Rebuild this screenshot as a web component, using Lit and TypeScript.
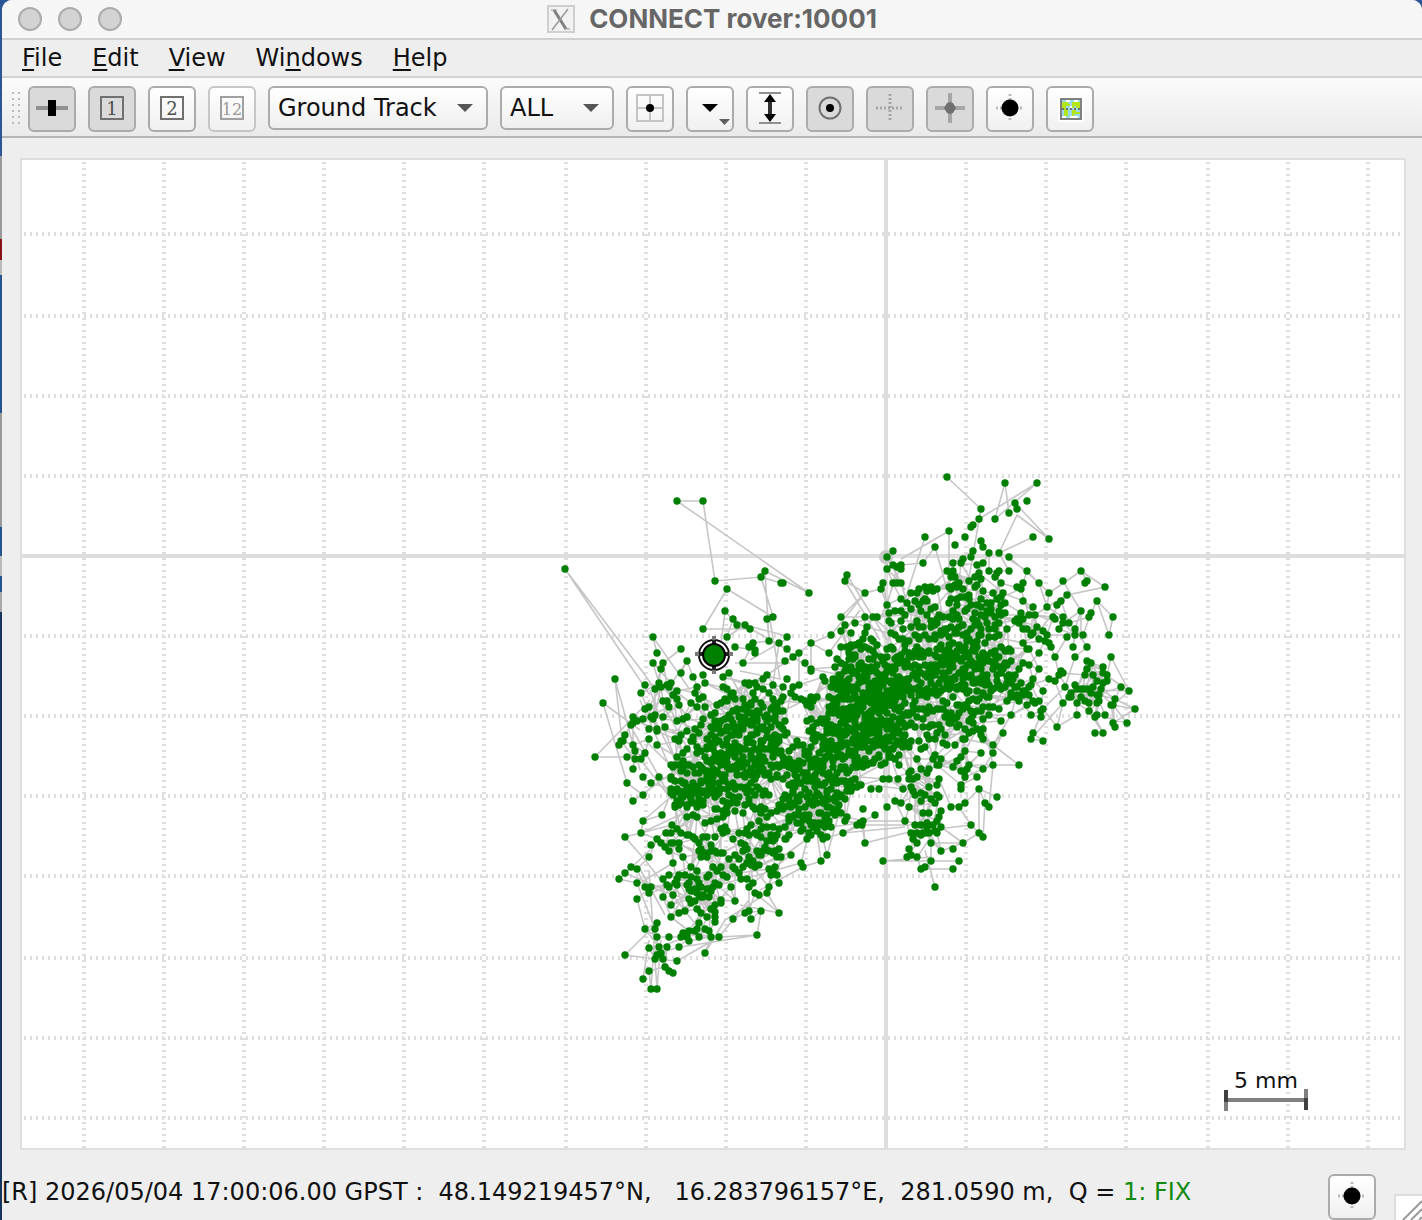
import { LitElement, html, css, svg } from "lit";
import { customElement } from "lit/decorators.js";

type Pt = [number, number];

/* Outlying fixes of the track, in plot units. */
const OUTER = `677,501 703,501 715,581 727,589 761,577 765,571 781,583 783,583 809,593 565,569 725,611 733,619 737,625 745,625 750,629 773,617 767,619
703,629 653,637 727,637 735,647 657,653 681,649 687,661 653,663 663,663 661,669 681,673 615,679 603,703 645,685 641,693 787,637 811,643
769,641 779,643 787,649 753,643 749,647 755,650 755,653 743,663 785,661 793,657 799,653 805,663 841,617 831,635 829,653 845,625 847,575
845,581 841,631 925,537 949,531 935,547 965,537 955,545 981,541 983,547 973,551 989,553 999,553 1009,557 893,551 887,557 971,557
963,559 953,563 961,563 923,563 977,565 983,563 887,569 893,565 901,565 901,569 897,567 947,571 953,571 955,577 989,571 999,571 997,573
1009,571 1027,571 995,577 1001,583 1039,583 1023,583 1017,587 1021,589 883,583 881,589 893,583 901,583 897,583 947,477 1005,483
1037,483 1027,501 1015,503 1017,509 1009,513 995,519 981,509 979,519 973,525 971,527 1033,537 1049,539 1081,571 1063,581 1087,581
1085,583 1105,587 1049,593 1067,595 1061,601 1057,605 1047,607 1097,601 1081,611 1091,613 1089,617 1113,617 1109,635 1063,617
1053,617 1055,619 1063,623 1069,623 1075,629 1059,629 1067,637 1075,635 1083,635 1073,647 1087,647 1075,657 1055,657 1039,653
1039,669 1111,657 1087,661 1091,663 1103,667 1107,675 1087,669 1121,687 1129,691 1043,631 1043,691 1033,679 1019,669 1045,641
1049,643 1051,647 1061,671 1059,675 1063,673 1049,679 1055,681 865,593 887,605 901,599 901,611 865,617 873,617 877,617 1135,709 1127,723
1103,733 1095,733 1115,727 1113,723 1115,699 1113,705 1111,705 1077,715 1105,715 1097,715 1095,717 1089,711 1089,703 1097,703 1099,695
1063,703 1057,727 1043,741 1031,739 1033,733 1031,715 1041,717 1043,709 1041,711 1039,701 1011,715 1001,721 1003,733 993,745 993,753
981,753 993,765 1019,765 983,769 977,777 965,777 979,789 997,797 961,785 961,789 989,807 985,803 965,803 959,807 951,807 971,825
979,833 983,837 941,827 937,833 929,833 935,831 931,843 963,843 953,849 941,851 959,861 931,861 953,869 935,887 925,867 921,869 907,857
911,855 909,849 917,843 913,839 911,833 883,861 865,843 863,809 875,815 887,807 871,789 879,789 903,789 883,779 889,779 898,779
909,779 913,779 909,807 901,803 895,801 905,821 860,823 863,821 862,825 843,833 823,839 827,855 821,861 595,757 627,757 619,745 625,735
623,741 633,745 635,751 645,753 635,759 641,759 633,769 627,783 643,777 651,783 659,777 649,739 657,745 665,727 649,729 657,731 643,795
633,801 643,821 641,833 625,837 651,845 649,857 662,815 672,825 666,833 631,867 637,869 625,873 619,879 637,883 637,899 645,887
651,887 649,893 673,863 683,857 669,851 665,847 657,839 661,843 645,929 655,929 657,923 657,937 669,937 671,917 671,905 673,895
625,955 649,948 659,947 667,947 679,947 677,961 661,953 655,959 663,959 657,955 665,967 669,971 673,973 649,971 643,979 651,989 657,989
681,937 689,941 705,953 719,937 757,935 761,911 779,913 751,919 749,911 745,913 733,919 735,901 721,903 721,900 731,887 715,917
715,922 715,912 709,931 705,929 683,933 689,931 695,931 699,923 701,913 707,917 685,911 679,913 695,901 689,899 767,893 759,895 755,893
769,887 779,883 749,887 777,875 771,875 773,870 803,867 801,863 791,855 781,857 779,849 786,839 785,839 807,839 633,723 631,725 621,741`;

/* Horizontal slices of the cloud: top, then [from, to, density] runs. */
const SLICES: [number, [number, number, number][]][] = [
  [572, [[948, 960, 2], [964, 985, 2]]],
  [584, [[908, 922, 2], [924, 938, 4], [946, 962, 4], [964, 986, 2], [990, 1002, 1]]],
  [596, [[906, 935, 3], [946, 960, 3], [964, 1006, 3], [1018, 1034, 1]]],
  [608, [[886, 906, 2], [908, 945, 2], [945, 1005, 3], [1012, 1036, 2]]],
  [620, [[846, 866, 1], [886, 892, 3], [896, 935, 2], [935, 1000, 3], [1005, 1036, 2]]],
  [632, [[850, 878, 3], [888, 1000, 3], [1020, 1046, 2]]],
  [644, [[840, 876, 3], [884, 935, 3], [935, 1012, 4], [1022, 1034, 2]]],
  [656, [[834, 930, 4], [930, 1010, 5], [1016, 1028, 1]]],
  [668, [[690, 706, 1], [718, 732, 1], [760, 770, 2], [782, 786, 1], [808, 812, 4], [820, 824, 4], [832, 900, 5], [900, 1016, 4], [1084, 1104, 1]]],
  [680, [[653, 676, 3], [690, 706, 2], [718, 732, 2], [742, 758, 3], [762, 784, 1], [790, 802, 1], [828, 890, 5], [890, 1012, 4], [1012, 1034, 3], [1064, 1108, 3]]],
  [692, [[658, 678, 2], [690, 704, 2], [714, 736, 3], [740, 760, 3], [766, 784, 3], [790, 818, 3], [828, 900, 5], [900, 990, 3], [1004, 1038, 3], [1066, 1084, 3], [1090, 1102, 2]]],
  [704, [[640, 656, 2], [668, 678, 2], [690, 718, 1], [728, 782, 4], [802, 812, 2], [826, 910, 5], [910, 998, 3]]],
  [716, [[630, 665, 2], [676, 704, 2], [710, 786, 4], [804, 820, 3], [820, 905, 5], [905, 985, 3]]],
  [728, [[672, 700, 2], [706, 788, 4], [808, 830, 4], [830, 906, 5], [916, 945, 2], [960, 984, 3]]],
  [740, [[676, 704, 2], [704, 780, 4], [786, 820, 3], [820, 910, 5], [918, 928, 2], [938, 966, 1]]],
  [752, [[672, 705, 2], [705, 764, 5], [770, 900, 4], [914, 918, 2], [930, 942, 3], [954, 970, 2]]],
  [764, [[668, 700, 3], [700, 765, 5], [768, 862, 4], [904, 936, 2], [952, 970, 2]]],
  [776, [[668, 735, 4], [735, 758, 3], [768, 790, 2], [792, 862, 4], [910, 914, 1], [926, 942, 2]]],
  [788, [[668, 720, 5], [720, 770, 3], [780, 850, 4], [910, 940, 3]]],
  [800, [[670, 705, 3], [712, 770, 3], [774, 800, 4], [804, 842, 4], [934, 942, 2]]],
  [812, [[682, 704, 2], [708, 728, 2], [750, 770, 2], [786, 834, 5], [840, 856, 2], [918, 940, 3]]],
  [824, [[668, 696, 2], [718, 728, 4], [738, 788, 3], [798, 832, 3], [910, 928, 4]]],
  [836, [[668, 682, 3], [692, 714, 3], [732, 748, 2], [758, 776, 3]]],
  [848, [[696, 728, 3], [732, 780, 3], [914, 918, 1]]],
  [860, [[684, 698, 1], [706, 726, 1], [730, 760, 3], [766, 776, 2]]],
  [872, [[660, 700, 3], [704, 728, 3], [740, 756, 2]]],
  [884, [[662, 676, 2], [688, 714, 5]]],
  [896, [[686, 700, 2], [704, 716, 2]]],
  [926, [[680, 712, 1]]],
];

/* Open patches that no short leg may cross: centre x, centre y, radius. */
const GAPS = [[796, 727, 9], [750, 672, 9], [790, 682, 8], [738, 671, 8], [718, 676, 4], [875, 800, 14], [864, 772, 0], [800, 715, 6], [920, 752, 5], [945, 815, 7]];

/* Hand-placed legs of the track between far-apart fixes. */
const LEGS =
  "M677 501H703L715 581L761 577L773 617M765 571L809 593L677 501M765 571L769 640M727 589L773 617M727 589L703 629H750" +
  "M565 569L650 695M565 569L645 675L662 700M615 679L622 740M615 679L640 770M603 703L627 783M603 703L640 730M595 757H627L640 759M595 757L650 700" +
  "M653 637L690 690M725 611L719 660M745 625L790 637L750 660M735 663L790 663M740 671L780 679L770 620M733 619L787 649M779 643L772 690M811 643V665" +
  "M947 477L981 509L979 519M1005 483L995 519L1037 483L979 519M1005 483L1009 513M1015 503L1049 539L1017 515L999 553L1033 537M1017 515L1049 539" +
  "M981 509L965 600M949 531L901 559M949 531V600M925 537L905 600M935 547L950 600M1009 557L1039 583L1047 607M1027 571L1010 560M989 571H1010" +
  "M847 575L887 640M845 581L865 593L841 617H877M845 581L880 640M831 635L865 593M829 653L860 610M901 565L880 620M887 557L905 590" +
  "M1081 571L1049 593M1081 571L1105 587L1067 595L1040 630M1097 601L1113 617L1109 635L1097 601M1063 581L1081 611V640M1111 657L1129 691L1100 690" +
  "M1111 657L1103 695M1135 709L1115 699M1135 709L1113 723M1127 723L1097 715M1103 733L1089 711M1057 727L1063 703L1031 739L1043 709M1043 741L1033 733" +
  "M1019 765L993 745M1019 765H983M989 807L993 765L981 710M1003 733L993 745L1011 715M979 833V789M983 837L985 803M997 797L979 789M971 825L905 833M971 825L959 807" +
  "M959 861H883L931 857M953 869H921M935 887L925 850M963 843L941 827M963 843H931M905 821H865L843 833L905 827M865 843L905 833M865 843L862 825M915 825H865" +
  "M883 779L850 776M903 789L870 785M823 839L827 800M827 855L840 810M821 861L812 800M803 867L760 890M801 863L740 880M807 839L785 855L750 870" +
  "M779 913L755 893M761 911L757 935L719 937L677 961M779 913L740 905M757 935L681 947M705 953L725 920L767 893M719 937L749 900" +
  "M625 955L657 923M625 955L655 959M651 989L655 929L637 883M657 989L661 940M643 979L649 940M645 929L637 899M657 989L649 870M619 879L650 850M625 837L645 860L700 930" +
  "M625 837L672 825M643 821L690 780M641 833L690 810M633 801L690 760M625 873L665 890M673 863L640 883M665 915L640 869M671 917L700 870M645 887L715 880" +
  "M640 700L680 790M650 690L690 800M630 725L672 800M655 720L690 790M645 740L680 775M640 759L672 800M660 700L700 770";

function noise(seed: number): () => number {
  let s = seed;
  return () => {
    s = (s * 1664525 + 1013904223) % 4294967296;
    return s / 4294967296;
  };
}

/* Whether the leg a-b passes through one of the open patches. */
function crossesGap([x, y]: Pt, [u, v]: Pt): boolean {
  const len = (u - x) ** 2 + (v - y) ** 2;
  return GAPS.some(([gx, gy, r]) => {
    const t = Math.max(0, Math.min(1, ((gx - x) * (u - x) + (gy - y) * (v - y)) / len));
    return Math.hypot(x + t * (u - x) - gx, y + t * (v - y) - gy) < r;
  });
}

function buildTrack(): { fixes: Pt[]; path: string } {
  const rnd = noise(20260504);
  const outer = OUTER.split(/\s+/).map((p) => p.split(",").map(Number) as Pt);
  const inner: Pt[] = [];
  const rate = [0, 0.011, 0.017, 0.025, 0.034, 0.046];
  for (const [top, runs] of SLICES) {
    for (const [from, to, level] of runs) {
      const n = Math.max(1, Math.round((to - from) * 12 * rate[level]));
      for (let i = 0; i < n; i++) {
        const x = from + (to - from) * ((i + rnd()) / n);
        const y = top + 12 * rnd();
        inner.push([2 * Math.round(x / 2) + 1, 2 * Math.round(y / 2) + 1]);
      }
    }
  }
  const fixes = [...outer, ...inner];
  let path = LEGS;
  fixes.forEach(([x, y], i) => {
    const reach = i < outer.length ? 24 : 32;
    let made = 0;
    for (let t = 0; t < 240 && made < 2; t++) {
      const [u, v] = fixes[Math.floor(rnd() * fixes.length)];
      const d = Math.hypot(u - x, v - y);
      if (y < 560 || d < 4 || d > reach || crossesGap([x, y], [u, v])) continue;
      path += `M${x} ${y}L${u} ${v}`;
      made++;
    }
  });
  return { fixes, path };
}

const track = buildTrack();
const dots = track.fixes.map(([x, y]) => `M${x} ${y}h0`).join("");

const COLUMNS = [84, 164, 244, 324, 404, 484, 566, 646, 726, 806, 966, 1046, 1126, 1208, 1288, 1368];
const ROWS = [234, 316, 396, 476, 636, 716, 796, 876, 958, 1038, 1118];

const icon = (body: unknown) => html`<svg class="icon" viewBox="0 0 44 42" aria-hidden="true">${body}</svg>`;

/* Every icon is drawn in a 44 x 42 box centred on 22,20. */
const icons = {
  connect: icon(svg`<path d="M6 20H38" stroke="#909090" stroke-width="4"/><path d="M18 12h8v16h-8z"/>`),
  one: icon(svg`<rect x="11" y="9" width="22" height="22" fill="none" stroke="#707070" stroke-width="2"/>
    <text x="22" y="27" class="num">1</text>`),
  two: icon(svg`<rect x="11" y="9" width="22" height="22" fill="none" stroke="#707070" stroke-width="2"/>
    <text x="22" y="27" class="num">2</text>`),
  both: icon(svg`<rect x="11" y="9" width="22" height="22" fill="none" stroke="#a0a0a0" stroke-width="2"/>
    <text x="22" y="27" class="num pale">12</text>`),
  center: icon(svg`<path d="M9 7h26v26H9zM22 7v26M9 20h26" fill="none" stroke="#c4c4c4" stroke-width="2"/><circle cx="22" cy="20" r="4"/>`),
  menu: icon(svg`<path d="M14 16h16l-8 8z"/><path d="M31 31h11l-5.500 6z" fill="#606060"/>`),
  fit: icon(svg`<path d="M11 5h22M11 35h22" stroke="#909090" stroke-width="2"/><path d="M22 12v16" stroke="#303030" stroke-width="4"/>
    <path d="M22 6l6 8H16zM22 34l6-8H16z"/>`),
  circle: icon(svg`<circle cx="22" cy="20" r="10.5" fill="none" stroke="#707070" stroke-width="2"/><circle cx="22" cy="20" r="4"/>`),
  grid: icon(svg`<path d="M8 20h28M22 6v28" stroke="#a4a4a4" stroke-width="3" stroke-dasharray="2 2"/>`),
  cross: icon(svg`<path d="M7 20h30M22 5v30" stroke="#a6a6a6" stroke-width="4"/><path d="M22 14l3 1 3 5-3 5-3 1-3-1-3-5 3-5z" fill="#707070"/>`),
  track: icon(svg`<path d="M8 20h28M22 6v28" stroke="#bbb" stroke-width="3" stroke-dasharray="2 2"/><circle cx="22" cy="20" r="8.5"/>`),
  map: icon(svg`<path d="M10 8h26v26H10z" fill="#fff"/><path d="M13 11h20v20H13z" fill="#9bd8ea" stroke="#808080" stroke-width="2"/>
    <path d="M18 12h4v2h-4zM26 12h4v2h-4zM14 28h4v2h-4zM22 28h8v2h-8zM22 18h2v2h-2z" fill="#fff"/>
    <path d="M14 14h6v4h-2v4h-2v-2h-2zM24 14h8v6h-4v-2h-2v2h-2zM16 22h4v6h-4zM24 22h4v4h-2v2h-2zM28 24h4v2h-4zM20 16h2v2h-2z" fill="#b0e61a"/>
    <path d="M14 20h2v2h-2zM18 20h2v2h-2zM22 20h2v2h-2zM26 20h2v2h-2zM30 20h2v2h-2z" fill="#707070"/>`),
};

@customElement("track-plot")
class TrackPlot extends LitElement {
  static styles = css`
    :host { display: block; }
    .plot { display: block; width: 100%; height: auto; background: #fff; }
    .label { font: 22px "DejaVu Sans", sans-serif; text-anchor: middle; fill: #111; }
  `;
  render() {
    return html`<svg class="plot" viewBox="20 158 1386 992" role="img" aria-label="Ground track">
      <g stroke="#dedede" fill="none">
        <path stroke-width="4" stroke-dasharray="2 4" d=${COLUMNS.map((x) => `M${x} 162V1149`).join("")} />
        <path stroke-width="4" stroke-dasharray="2 4" d=${ROWS.map((y) => `M24 ${y}H1405`).join("")} />
        <path stroke-width="4" d="M886 158V1150M20 556H1406" />
        <rect x="21" y="159" width="1384" height="990" stroke-width="2" />
      </g>
      <circle cx="886" cy="557" r="7" fill="#c8c8c8" />
      <path d=${track.path} fill="none" stroke="#c6c6c6" stroke-width="1.6" />
      <path d=${dots} fill="none" stroke="#008000" stroke-width="7.4" stroke-linecap="round" />
      <circle cx="714" cy="655" r="15" fill="#fff" stroke="#111" stroke-width="2" />
      <path d="M714 636v4M714 670v4M695 654h4M729 654h4" stroke="#777" stroke-width="4" />
      <path d="M714 640v5M714 665v5M699 654h5M724 654h5" stroke="#222" stroke-width="4" />
      <circle cx="714" cy="655" r="11" fill="#008000" stroke="#000" stroke-width="2" />
      <path d="M1226 1100H1306" stroke="#808080" stroke-width="4" />
      <path d="M1226 1102v9M1306 1089v9" stroke="#808080" stroke-width="4" />
      <path d="M1226 1090v12M1306 1098v12" stroke="#404040" stroke-width="4" />
      <text class="label" x="1266" y="1088">5 mm</text>
    </svg>`;
  }
}

@customElement("app-root")
class AppRoot extends LitElement {
  static styles = css`
    :host { display: block; font-family: "DejaVu Sans", sans-serif; color: #111; }
    * { box-sizing: border-box; }
    .desktop {
      min-height: 100vh; padding-left: 2px; display: flex;
      background: linear-gradient(#2b5797 0 156px, #999 156px 239px, #8a1216 239px 260px, #bbb 260px 275px, #24558f 275px 413px,
        #999 413px 527px, #24558f 527px 556px, #bbb 556px 576px, #24558f 576px 592px, #aaa 592px 612px, #17365f 612px);
    }
    .window { flex: 1; min-width: 0; display: flex; flex-direction: column; background: #eee; border-radius: 10px 10px 0 0; overflow: hidden; }
    .title { height: 40px; display: flex; align-items: center; background: #f6f6f6; border-bottom: 2px solid #d0d0d0; padding: 0 16px; }
    .lights { display: flex; gap: 16px; flex: 1; }
    .light { width: 24px; height: 24px; padding: 0; border: 2px solid #acacac; border-radius: 50%; background: #d3d3d3; }
    .caption { display: flex; align-items: center; gap: 14px; }
    .caption h1 { margin: 0; font: 700 26px/38px Inter, sans-serif; color: #666; }
    .xicon { width: 28px; height: 28px; display: block; }
    .spacer { flex: 1; }
    .menu { height: 38px; display: flex; align-items: center; gap: 30px; padding: 0 20px; border-bottom: 2px solid #d2d2d2; }
    .menu button { border: 0; padding: 0; background: none; font: 24px/28px "DejaVu Sans", sans-serif; color: #111; }
    .menu u { text-decoration-thickness: 2px; text-underline-offset: 3px; }
    .tools { min-height: 60px; display: flex; gap: 6px; padding: 8px 10px 4px; background: linear-gradient(#fbfbfb, #eaeaea); border-bottom: 2px solid #b6b6b6; }
    .grip { width: 10px; height: 44px; flex: none; display: block; }
    .row { display: flex; flex-wrap: wrap; gap: 12px; }
    .tool { width: 48px; height: 46px; flex: none; padding: 0; border: 2px solid #ababab; border-radius: 6px; background: linear-gradient(#fff, #f0f0f0); display: block; }
    .tool[aria-pressed="true"] { background: #dadada; }
    .tool:disabled { border-color: #c6c6c6; }
    .icon { display: block; width: 44px; height: 42px; }
    .num { font: 18px "DejaVu Serif", serif; text-anchor: middle; fill: #505050; }
    .pale { font-size: 16px; fill: #999; }
    .pick { position: relative; display: block; height: 44px; }
    .pick select {
      appearance: none; width: 100%; height: 44px; padding: 0 8px; border: 2px solid #ababab; border-radius: 6px;
      background: linear-gradient(#fff, #efefef); font: 24px "DejaVu Sans", sans-serif; color: #111;
    }
    .pick svg { position: absolute; right: 15px; top: 18px; width: 16px; height: 8px; pointer-events: none; }
    .wide { width: 220px; }
    .slim { width: 114px; }
    .main { padding: 20px 16px 0 18px; flex: 1; }
    .status { min-height: 70px; display: flex; align-items: flex-end; }
    .fix { flex: 1; margin: 0; white-space: pre; font-size: 24px; line-height: 28px; padding-bottom: 14px; }
    .ok { color: #118a11; }
    .corner { width: 28px; height: 26px; margin-left: 18px; display: block; flex: none; }
  `;

  private menuItem(before: string, key: string, after: string) {
    return html`<button type="button">${before}<u>${key}</u>${after}</button>`;
  }

  private tool(label: string, glyph: unknown, pressed = false, disabled = false) {
    return html`<button class="tool" type="button" aria-label=${label} aria-pressed=${pressed} ?disabled=${disabled}>${glyph}</button>`;
  }

  private pick(label: string, size: string, options: string[]) {
    return html`<label class="pick ${size}">
      <select aria-label=${label}>${options.map((o) => html`<option>${o}</option>`)}</select>
      <svg viewBox="0 0 16 8" aria-hidden="true"><path d="M0 0h16l-8 8z" fill="#555" /></svg>
    </label>`;
  }

  render() {
    return html`<div class="desktop"><div class="window">
      <header class="title">
        <div class="lights">
          <button class="light" aria-label="Close"></button>
          <button class="light" aria-label="Minimize"></button>
          <button class="light" aria-label="Zoom"></button>
        </div>
        <div class="caption">
          <svg class="xicon" viewBox="0 0 28 28" aria-hidden="true">
            <rect x="1" y="1" width="26" height="26" fill="#f2f2f2" stroke="#cfcfcf" stroke-width="2" />
            <path d="M7 5l12 19" stroke="#808080" stroke-width="3" />
            <path d="M21 4L5 25" stroke="#999" stroke-width="1.5" />
            <path d="M4 5h6M17 24h6" stroke="#999" stroke-width="1" />
          </svg>
          <h1>CONNECT rover:10001</h1>
        </div>
        <div class="spacer"></div>
      </header>
      <nav class="menu" aria-label="Menu">
        ${this.menuItem("", "F", "ile")}${this.menuItem("", "E", "dit")}${this.menuItem("", "V", "iew")}
        ${this.menuItem("Wi", "n", "dows")}${this.menuItem("", "H", "elp")}
      </nav>
      <div class="tools">
        <svg class="grip" viewBox="0 0 10 44" aria-hidden="true">
          <path d="M1 6v34M7 6v34" stroke="#bcbcbc" stroke-width="2" stroke-dasharray="2 4" />
        </svg>
        <div class="row">
          ${this.tool("Connect", icons.connect, true)}
          ${this.tool("Solution 1", icons.one, true)}
          ${this.tool("Solution 2", icons.two)}
          ${this.tool("Solution 1-2", icons.both, false, true)}
          ${this.pick("Plot type", "wide", ["Ground Track", "Position", "Velocity"])}
          ${this.pick("Quality", "slim", ["ALL", "1", "2"])}
          ${this.tool("Center on origin", icons.center)}
          ${this.tool("More", icons.menu)}
          ${this.tool("Fit vertically", icons.fit)}
          ${this.tool("Track point", icons.circle, true)}
          ${this.tool("Fix horizontally", icons.grid, true)}
          ${this.tool("Fix vertically", icons.cross, true)}
          ${this.tool("Show track", icons.track)}
          ${this.tool("Show map", icons.map)}
        </div>
      </div>
      <main class="main"><track-plot></track-plot></main>
      <footer class="status">
        <p class="fix">${"[R] 2026/05/04 17:00:06.00 GPST :  48.149219457°N,   16.283796157°E,  281.0590 m,  Q = "}<span class="ok">1: FIX</span></p>
        ${this.tool("Show track point", icons.track)}
        <svg class="corner" viewBox="0 0 28 26" aria-hidden="true">
          <rect x="1" y="1" width="30" height="30" fill="#fff" stroke="#ddd" stroke-width="2" />
          <path d="M9 26L28 7M17 26L28 15M25 26l3-3" stroke="#999" stroke-width="2" />
        </svg>
      </footer>
    </div></div>`;
  }
}
